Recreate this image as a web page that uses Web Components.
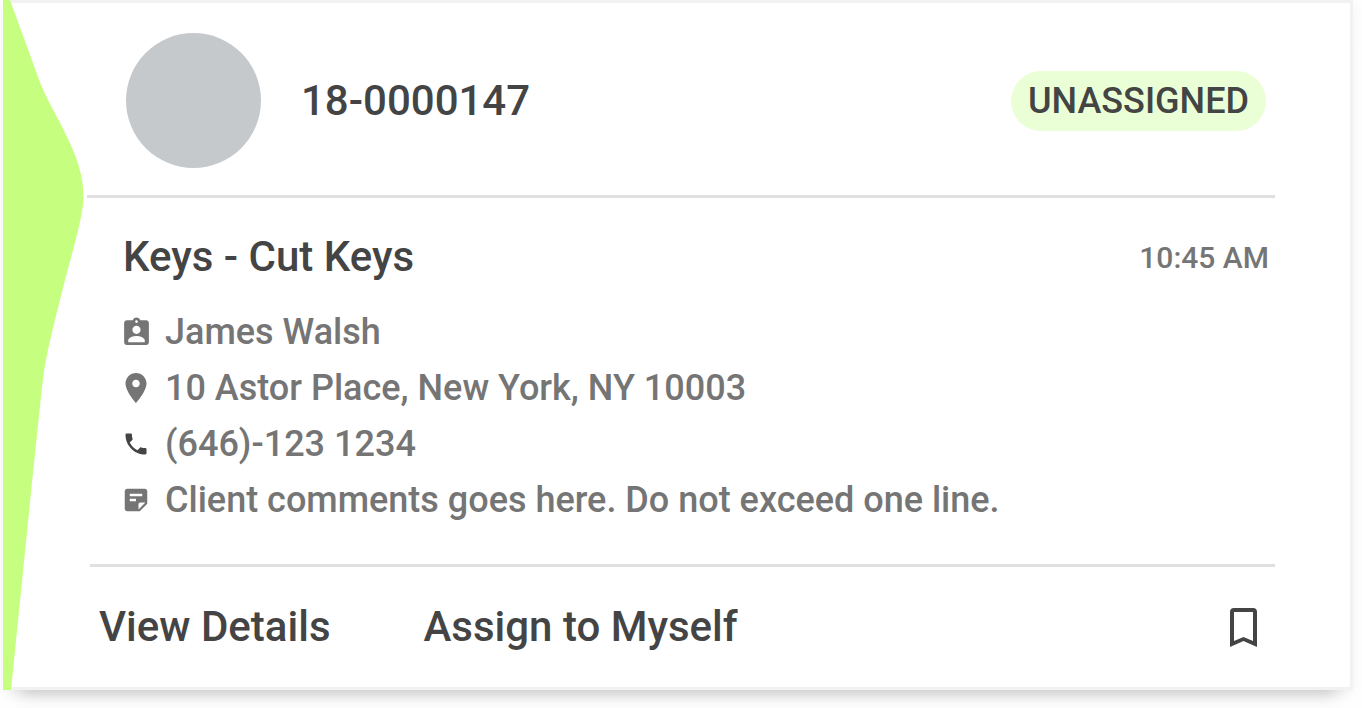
<!DOCTYPE html>
<html lang="en">
<head>
<meta charset="utf-8">
<meta name="viewport" content="width=device-width, initial-scale=1">
<title>Ticket 18-0000147</title>
<style>

    body {
        margin: 0;
        background: #fefefe;
        color: #444;
        font-family: Roboto, "Liberation Sans", sans-serif;
        font-weight: 500;
    }

</style>
</head>
<body>

<ticket-card>

    <ticket-header slot="header">
        18-0000147
        <status-badge slot="status">UNASSIGNED</status-badge>
    </ticket-header>

    <ticket-summary>
        Keys - Cut Keys
        <time slot="time" datetime="10:45">10:45 AM</time>
    </ticket-summary>

    <ticket-detail icon="person">James Walsh</ticket-detail>
    <ticket-detail icon="place">10 Astor Place, New York, NY 10003</ticket-detail>
    <ticket-detail icon="phone">(646)-123 1234</ticket-detail>
    <ticket-detail icon="note">Client comments goes here. Do not exceed one line.</ticket-detail>

    <ticket-actions slot="actions"></ticket-actions>

</ticket-card>

<script>

const icons = {

    person: `<svg width="33" height="33" viewBox="0 0 24 24" fill="#757575" aria-hidden="true">
        <path d="M19 3h-4.18C14.4 1.84 13.3 1 12 1c-1.3 0-2.4.84-2.82 2H5c-1.1 0-2 .9-2 2v14c0 1.1.9 2 2 2h14c1.1 0 2-.9 2-2V5c0-1.1-.9-2-2-2zm-7 0c.55 0 1 .45 1 1s-.45 1-1 1-1-.45-1-1 .45-1 1-1zm0 4c1.66 0 3 1.34 3 3s-1.34 3-3 3-3-1.34-3-3 1.34-3 3-3zm6 12H6v-1.4c0-2 4-3.1 6-3.1s6 1.1 6 3.1V19z"/>
    </svg>`,

    place: `<svg width="36" height="36" viewBox="0 0 24 24" fill="#757575" aria-hidden="true">
        <path d="M12 2C8.13 2 5 5.13 5 9c0 5.25 7 13 7 13s7-7.75 7-13c0-3.87-3.13-7-7-7zm0 9.5c-1.38 0-2.5-1.12-2.5-2.5s1.12-2.5 2.5-2.5 2.5 1.12 2.5 2.5-1.12 2.5-2.5 2.5z"/>
    </svg>`,

    phone: `<svg width="28" height="28" viewBox="0 0 24 24" fill="#444" aria-hidden="true">
        <path d="M6.62 10.79c1.44 2.83 3.76 5.14 6.59 6.59l2.2-2.2c.27-.27.67-.36 1.02-.24 1.12.37 2.33.57 3.57.57.55 0 1 .45 1 1V20c0 .55-.45 1-1 1-9.39 0-17-7.61-17-17 0-.55.45-1 1-1h3.5c.55 0 1 .45 1 1 0 1.25.2 2.45.57 3.57.11.35.03.74-.25 1.02l-2.2 2.2z"/>
    </svg>`,

    note: `<svg width="30" height="30" viewBox="0 0 24 24" fill="#757575" aria-hidden="true">
        <path fill-rule="evenodd" d="M5 3h14c1.1 0 2 .9 2 2v10l-6 6H5c-1.1 0-2-.9-2-2V5c0-1.1.9-2 2-2zM7 7v2h10V7zM7 11v2h5v-2zM14 19.5 19.5 14H15.5c-.8 0-1.5.7-1.5 1.5z"/>
    </svg>`,

    bookmark: `<svg width="27" height="39" viewBox="0 0 27 39" fill="#444" aria-hidden="true">
        <path fill-rule="evenodd" d="M4 0H23a4 4 0 0 1 4 4V39L13.5 33 0 39V4a4 4 0 0 1 4-4zM4 4V33L13.5 29 23 33V4z"/>
    </svg>`
};

function define(name, html) {

    const template = document.createElement("template");

    template.innerHTML = html;

    customElements.define(name, class extends HTMLElement {

        constructor() {

            super();

            this.attachShadow({ mode: "open" });

            this.shadowRoot.appendChild(
                template.content.cloneNode(true)
            );
        }
    });
}

define("ticket-card", `

    <style>

        :host {
            display: block;
            padding: 0 9px 18px 3px;
        }

        article {
            display: grid;
            grid-template-columns: 81px 1fr;
            background: white;
            box-shadow:
                inset 0 0 0 3px #f2f2f2,
                0 20px 16px -16px rgba(0, 0, 0, 0.2),
                0 3px 12px rgba(0, 0, 0, 0.05);
        }

        /* the wave stretches with the height of the card */
        .wave {
            width: 100%;
            height: 100%;
            min-height: 0;
            contain: size;
            display: block;
            fill: #c6ff80;
        }

        .content {
            padding: 3px 78px 3px 3px;
        }

        .details {
            padding: 32px 0 36px 36px;
            border-top: 3px solid #e0e0e0;
        }

    </style>

    <article>

        <svg class="wave" viewBox="0 0 81 690" preserveAspectRatio="none" aria-hidden="true">
            <path d="M0 0H7L34 74C41 96 55 117 63 135C74 157 80.5 176 80.5 197C80.5 218 66 262 57 300C50 328 42 358 39 387L30 473L8 690H0Z"/>
        </svg>

        <div class="content">

            <slot name="header"></slot>

            <div class="details">
                <slot></slot>
            </div>

            <slot name="actions"></slot>

        </div>

    </article>
`);

define("ticket-header", `

    <style>

        :host {
            display: block;
        }

        header {
            display: flex;
            align-items: center;
            gap: 40px;
            padding: 30px 9px 27px 39px;
        }

        .avatar {
            flex: none;
            width: 135px;
            height: 135px;
            border-radius: 50%;
            background: #c6c9cc;
        }

        h1 {
            flex: 1;
            margin: 0;
            font-size: 42px;
            line-height: 48px;
            font-weight: 500;
        }

    </style>

    <header>
        <div class="avatar"></div>
        <h1><slot></slot></h1>
        <slot name="status"></slot>
    </header>
`);

define("status-badge", `

    <style>

        :host {
            display: block;
            padding: 0 17px;
            border-radius: 30px;
            background: #ebffd6;
            font-size: 36px;
            line-height: 60px;
        }

    </style>

    <slot></slot>
`);

define("ticket-summary", `

    <style>

        :host {
            display: flex;
            align-items: center;
            justify-content: space-between;
            padding: 0 6px 20px 0;
        }

        h2 {
            margin: 0;
            font-size: 42px;
            line-height: 54px;
            font-weight: 500;
        }

        ::slotted(time) {
            color: #757575;
            font-size: 30px;
        }

    </style>

    <h2><slot></slot></h2>
    <slot name="time"></slot>
`);

define("ticket-actions", `

    <style>

        :host {
            display: flex;
            align-items: center;
            margin-left: 3px;
            padding: 0 18px 0 9px;
            border-top: 3px solid #e0e0e0;
            min-height: 120px;
            gap: 93px;
        }

        button {
            padding: 0;
            border: 0;
            background: none;
            color: inherit;
            font: inherit;
            font-size: 42px;
            line-height: 48px;
            cursor: pointer;
        }

        .save {
            display: flex;
            margin-left: auto;
        }

    </style>

    <button type="button">View Details</button>
    <button type="button">Assign to Myself</button>
    <button type="button" class="save" aria-label="Bookmark">${icons.bookmark}</button>
`);

class TicketDetail extends HTMLElement {

    constructor() {

        super();

        this.attachShadow({ mode: "open" });
    }

    connectedCallback() {

        this.shadowRoot.innerHTML = `

            <style>

                :host {
                    display: flex;
                    align-items: center;
                    gap: 11px;
                    margin-left: -5px;
                    color: #757575;
                    font-size: 36px;
                    line-height: 56px;
                }

                .icon {
                    flex: none;
                    display: flex;
                    justify-content: center;
                    width: 36px;
                }

            </style>

            <span class="icon">${icons[this.getAttribute("icon")]}</span>
            <span><slot></slot></span>
        `;
    }
}

customElements.define("ticket-detail", TicketDetail);

</script>

</body>
</html>
